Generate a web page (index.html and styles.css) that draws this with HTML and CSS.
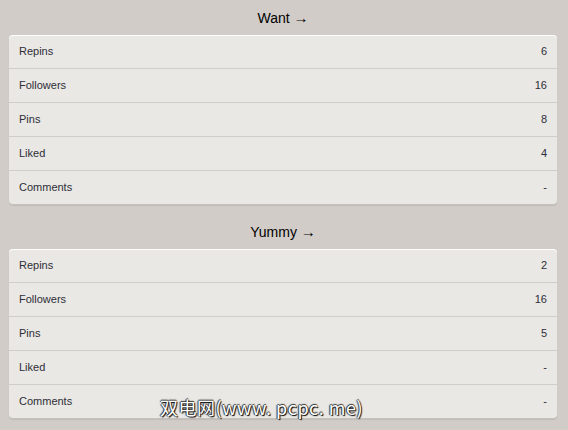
FILE: index.html
```html
<!DOCTYPE html>
<html>
<head>
<meta charset="utf-8">
<link rel="stylesheet" href="styles.css">
</head>
<body>
<div class="page">
  <section class="group">
    <h2 class="title">Want <span class="arrow">→</span></h2>
    <div class="card">
      <div class="row"><span>Repins</span><span>6</span></div>
      <div class="row"><span>Followers</span><span>16</span></div>
      <div class="row"><span>Pins</span><span>8</span></div>
      <div class="row"><span>Liked</span><span>4</span></div>
      <div class="row"><span>Comments</span><span>-</span></div>
    </div>
  </section>
  <section class="group">
    <h2 class="title">Yummy <span class="arrow">→</span></h2>
    <div class="card">
      <div class="row"><span>Repins</span><span>2</span></div>
      <div class="row"><span>Followers</span><span>16</span></div>
      <div class="row"><span>Pins</span><span>5</span></div>
      <div class="row"><span>Liked</span><span>-</span></div>
      <div class="row"><span>Comments</span><span>-</span></div>
    </div>
  </section>
</div>
<div class="watermark">双电网(www. pcpc. me)</div>
</body>
</html>
```
FILE: styles.css
```css
html, body {
  margin: 0;
  padding: 0;
  background: #d1ccc8;
}
body {
  font-family: "Liberation Sans", Arial, sans-serif;
  width: 568px;
  height: 430px;
  overflow: hidden;
  position: relative;
}
.page {
  padding: 8px 11px 0 9px;
}
.group {
  margin-bottom: 18px;
}
.title {
  margin: 0 0 7px;
  font-size: 14px;
  font-weight: normal;
  line-height: 20px;
  text-align: center;
  color: #000;
}
.arrow {
  font-family: "Liberation Serif", serif;
  font-size: 15px;
}
.card {
  background: #e9e8e4;
  border-radius: 4px;
  box-shadow: inset 0 1px 0 #fff, 0 1px 0 #c4c0bb, 0 2px 1px rgba(0,0,0,0.08);
}
.row {
  height: 33px;
  box-sizing: border-box;
  height: 34px;
  display: flex;
  align-items: center;
  justify-content: space-between;
  padding: 0 10px 2px;
  font-size: 11px;
  color: #2e2e38;
  border-bottom: 1px solid #d0ceca;
}
.row:last-child {
  border-bottom: none;
  height: 33px;
}
.watermark {
  position: absolute;
  left: 160px;
  top: 396px;
  font-family: "Noto Sans CJK SC", "DejaVu Sans", sans-serif;
  font-size: 18px;
  line-height: 22px;
  color: #fff;
  letter-spacing: 0.5px;
  text-shadow: 1px 1px 1px #000, -1px 0 1px #333, 0 -1px 1px #333;
}
```
